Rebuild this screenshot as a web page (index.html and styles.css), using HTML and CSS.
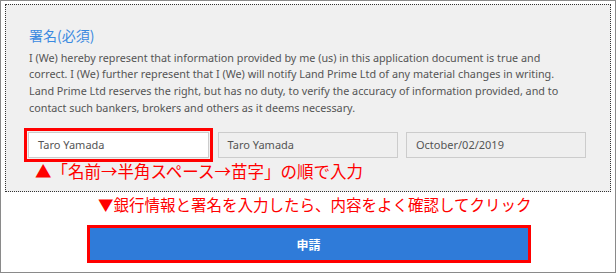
FILE: index.html
```html
<!DOCTYPE html>
<html lang="ja">
<head>
<meta charset="utf-8">
<title>署名</title>
<link rel="stylesheet" href="styles.css">
</head>
<body>
<div class="frame">
  <section class="panel">
    <h2 class="title">署名(必須)</h2>
    <p class="terms">I (We) hereby represent that information provided by me (us) in this application document is true and<br>correct. I (We) further represent that I (We) will notify Land Prime Ltd of any material changes in writing.<br>Land Prime Ltd reserves the right, but has no duty, to verify the accuracy of information provided, and to<br>contact such bankers, brokers and others as it deems necessary.</p>
    <div class="fields">
      <div class="field field-active">Taro Yamada</div>
      <div class="field field-readonly">Taro Yamada</div>
      <div class="field field-readonly">October/02/2019</div>
    </div>
    <p class="note note-up">▲「名前→半角スペース→苗字」の順で入力</p>
  </section>
  <p class="note note-down">▼銀行情報と署名を入力したら、内容をよく確認してクリック</p>
  <div class="actions">
    <button class="submit" type="button">申請</button>
  </div>
</div>
</body>
</html>
```

FILE: styles.css
```css
html, body {
  margin: 0;
  padding: 0;
  background: #ffffff;
}

body {
  font-family: "Noto Sans", "Noto Sans CJK JP", sans-serif;
}

.frame {
  box-sizing: border-box;
  width: 616px;
  height: 273px;
  border: 1px solid #8a8a8a;
  padding: 3px 4px 0 4px;
}

.panel {
  box-sizing: border-box;
  height: 188px;
  border: 1px dotted #333333;
  background: #f0f0f0;
  padding: 20px 22px 0 22px;
}

.title {
  margin: 0;
  font-size: 14px;
  line-height: 20px;
  font-weight: normal;
  color: #3a8ae0;
  font-family: "Noto Sans CJK JP", sans-serif;
  padding-left: 1px;
}

.terms {
  margin: 4.5px 0 0 0;
  padding-left: 1px;
  font-size: 10.8px;
  line-height: 16.8px;
  color: #555555;
  white-space: nowrap;
}

.fields {
  display: grid;
  grid-template-columns: 181px 180px 180px;
  column-gap: 8.5px;
  margin-top: 15.3px;
}

.field {
  box-sizing: border-box;
  height: 26px;
  border: 1px solid #cccccc;
  padding: 0 9px;
  font-size: 11px;
  line-height: 24px;
  color: #555555;
}

.field-active {
  background: #ffffff;
  outline: 3px solid #ff0000;
  outline-offset: 1px;
}

.field-readonly {
  background: #efefef;
}

.note {
  margin: 0;
  color: #ff0000;
  font-family: "Noto Sans CJK JP", sans-serif;
  font-size: 16px;
  line-height: 20px;
  white-space: nowrap;
}

.note-up {
  margin-top: 3px;
  margin-left: 7px;
  font-size: 16.5px;
}

.note-down {
  margin-top: 2px;
  margin-left: 93px;
  font-size: 15.5px;
}

.actions {
  display: flex;
  justify-content: center;
  margin-top: 11px;
}

.submit {
  box-sizing: border-box;
  width: 444px;
  height: 38px;
  margin-left: 1px;
  border: 3px solid #ff0000;
  background: #2f7bd9;
  color: #ffffff;
  font-family: "Noto Sans CJK JP", sans-serif;
  font-weight: bold;
  font-size: 12px;
  padding: 0;
}
```
